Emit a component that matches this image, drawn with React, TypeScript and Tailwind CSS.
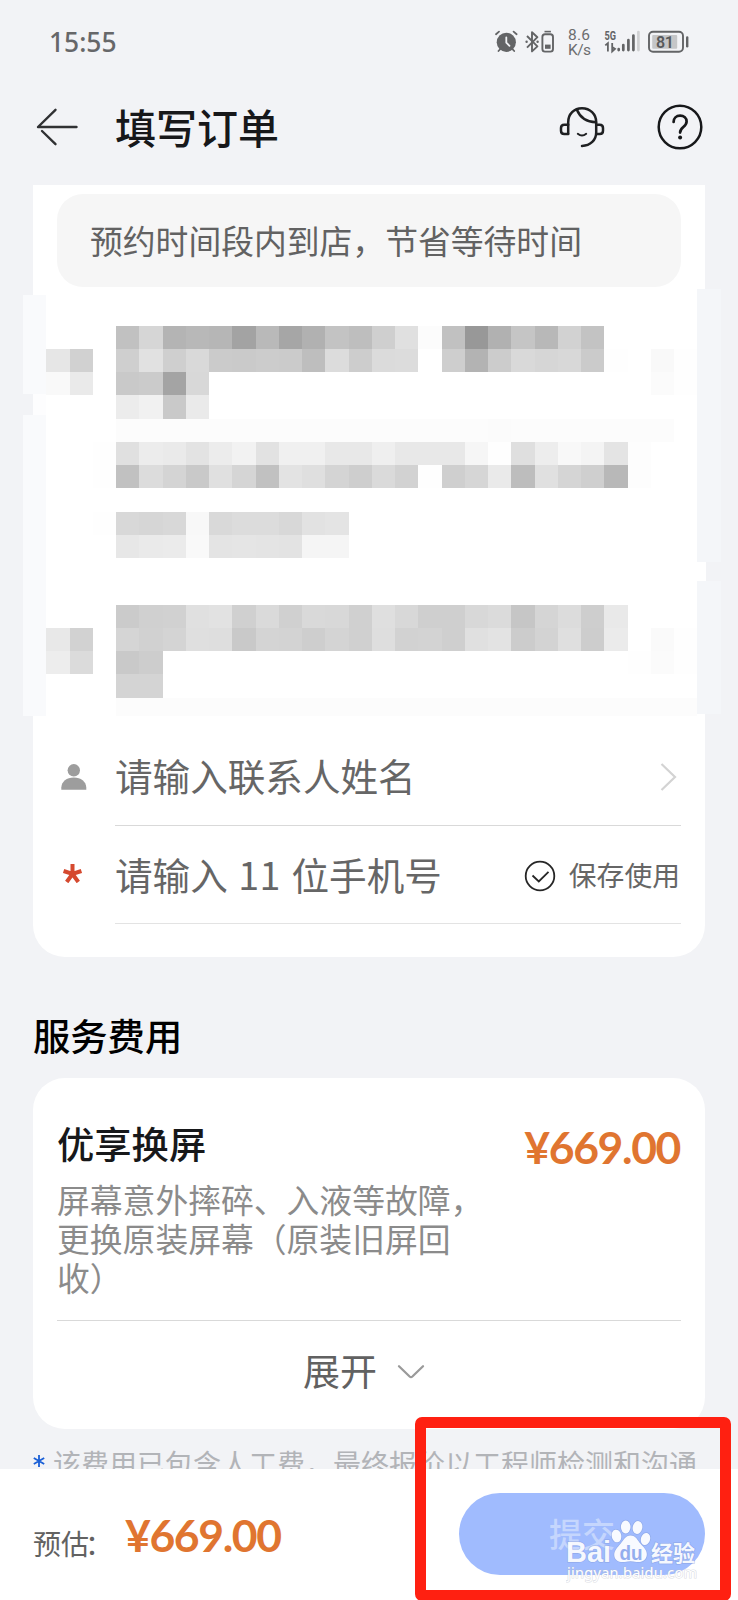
import React from 'react';

const CELL = 23.25;

// Each row: [first column, grey level per cell]. Columns start at the left edge strip.
const MOSAIC: Array<Array<[number, string]>> = [
  [[4, 'c1 d6 b4 b8 b6 a3 b9 a6 b1 c3 be cf e0 fc c1 98 b1 c5 b8 d2 c3']],
  [[1, 'e6 d1 ff cf e1 cf d9 cb ca cc cb be dc cd db dc ff ce b3 cc d9 d6 d8 cb fe'], [27, 'f9 fe']],
  [[1, 'f9 ea ff c9 cb a4 d8'], [27, 'fb fe']],
  [[4, 'ec f1 c9 ea']],
  [[4, 'fc fc fc fc fc fc fc fc fc fc fc fc fc fc fc fc fb fc fc fc fc fc fc fc']],
  [[3, 'fe e0 ec ea e3 ec f2 e2 f0 f0 e8 e8 ef e8 e8 e8 f6 fe df ed f8 f4 e4 fd']],
  [[3, 'fe c1 dc d4 c9 e0 d5 c1 e3 df d4 ce da d2 fe cf d6 ea bd e0 d5 cf b8 fd']],
  [],
  [[3, 'fe d8 d6 d8 f8 d9 dc dc d8 e2 e4']],
  [[4, 'e7 ea eb f9 e4 e5 e4 e3 f5 f5']],
  [],
  [],
  [[4, 'cb d0 d1 e0 e2 d0 da d0 d9 d8 d0 df d8 cf cf d8 db c6 d5 dc ce e9']],
  [[1, 'e8 d2 ff d5 d1 d4 df de c9 d4 d3 ce d4 d0 de d2 d3 cf e0 e3 cc d3 df cd eb'], [27, 'fa fe']],
  [[1, 'ed db ff c9 cd'], [26, 'fe fb fe']],
  [[4, 'd4 d4']],
];

const Mosaic: React.FC = () => (
  <div className="-mx-[10px] flex h-[429px] w-[698px] shrink-0">
    <div className="flex w-[23.25px] shrink-0 flex-col pt-[8px]">
      <div className="h-[99px] bg-[#f9fafc]" />
      <div className="ml-[10px] h-[21px] bg-[#fdfdfe]" />
      <div className="h-[301px] bg-[#f9fafc]" />
    </div>
    <div className="flex w-[651px] shrink-0 flex-col pt-[39px]">
      {MOSAIC.map((row, y) => (
        <div
          key={y}
          className="grid shrink-0"
          style={{ height: CELL, gridTemplateColumns: `repeat(28, ${CELL}px)` }}
        >
          {row.flatMap(([start, greys]) =>
            greys.split(' ').map((g, i) => (
              <div
                key={start + i}
                style={{ gridColumn: start + i, gridRow: 1, backgroundColor: `#${g}${g}${g}` }}
              />
            ))
          )}
        </div>
      ))}
      <div className="ml-[69.75px] h-[18px] bg-[#fcfcfc]" />
    </div>
    <div className="flex w-[23.25px] shrink-0 flex-col pt-[2px]">
      <div className="h-[273px] bg-[#f4f6f9]" />
      <div className="h-[19px] w-[9px] bg-white" />
      <div className="h-[133px] bg-[#f4f6f9]" />
    </div>
  </div>
);

const StatusIcons: React.FC = () => (
  <svg width="195" height="30" viewBox="0 0 195 30" fill="none">
    {/* alarm */}
    <g stroke="#636466" strokeLinecap="round">
      <circle cx="12.3" cy="15.3" r="9.6" fill="#636466" stroke="none" />
      <path d="M2 7.2l3-2.6M22.6 7.2l-3-2.6M4.5 24l2.4-2.6M20.2 24l-2.4-2.6" strokeWidth="1.8" />
      <path d="M12.3 10.3v5.3l3.2 3.2" stroke="#f2f3f6" strokeWidth="1.8" />
    </g>
    {/* bluetooth */}
    <path d="M33 9l10.4 10.4-5.4 5V5.2l5.4 5L33 20.6" stroke="#636466" strokeWidth="1.9" strokeLinejoin="round" />
    <circle cx="32.6" cy="14.8" r="1.2" fill="#636466" />
    <circle cx="43.6" cy="14.8" r="1.2" fill="#636466" />
    <rect x="48.4" y="7.3" width="10.6" height="17.3" rx="2.6" stroke="#636466" strokeWidth="1.9" />
    <path d="M50.5 4.6h6.4" stroke="#636466" strokeWidth="1.6" />
    <rect x="51" y="17.6" width="5.6" height="4.2" fill="#636466" />
    {/* network speed */}
    <g fill="#6c6d6f" fontFamily="Roboto, sans-serif">
      <text x="74" y="13" fontSize="15.5" textLength="22">8.6</text>
      <text x="74" y="27.6" fontSize="15.5" textLength="23">K/s</text>
    </g>
    <text x="110.5" y="12.8" fontSize="12" fontWeight="700" fill="#636466" fontFamily="Roboto, sans-serif" textLength="11.5" lengthAdjust="spacingAndGlyphs">5G</text>
    <path d="M111.3 18.4l2.6-2.2v8.4M118.2 16v8.4l2.8-2.6-2.8-1.8" stroke="#636466" strokeWidth="1.8" />
    <g strokeWidth="2.7" strokeLinecap="round">
      <path d="M124.7 22.2v.9M129.3 18v5.1M134.4 13.2v9.9M139.4 8.6v14.5" stroke="#636466" />
      <path d="M144.4 5v18.1" stroke="#cfd0d2" />
    </g>
    {/* battery */}
    <rect x="155" y="4.8" width="34" height="20" rx="4" stroke="#636466" strokeWidth="1.9" />
    <rect x="158.2" y="8" width="25" height="13.8" rx="1" fill="#c5c6c8" />
    <path d="M193.2 10.5v8.8" stroke="#636466" strokeWidth="2.4" strokeLinecap="round" />
    <text x="162" y="20.5" fontSize="16" fontWeight="600" fill="#58595b" fontFamily="Roboto, sans-serif" textLength="18">81</text>
  </svg>
);

const ServiceIcon: React.FC = () => (
  <svg width="46" height="42" viewBox="0 0 46 42" fill="none" stroke="#1f2022" strokeWidth="2.5" strokeLinecap="round">
    <path d="M9.2 27.5V16.2C9.2 8 15 2.3 23 2.3S37.2 8 37.2 16.2v10.3C37.2 34 31.5 39.6 23 39.9" />
    <path d="M9.2 18.7H5.3Q2 18.7 2 22v2.7Q2 28 5.3 28h3.9M37.2 18.7h3.5Q44 18.7 44 22v2.7Q44 28 40.7 28h-3.5" />
    <path d="M18 4c3 7.2 8.2 12 19 12.3" />
    <path d="M18.8 27.8c2.6 2.2 5.8 2.2 8.4 0" strokeWidth="2" />
  </svg>
);

const HelpIcon: React.FC = () => (
  <svg width="46" height="46" viewBox="0 0 46 46" fill="none" stroke="#17181a" strokeWidth="2.5" strokeLinecap="round">
    <circle cx="23" cy="23" r="21.3" />
    <path d="M16.6 18c0-3.800 2.700-6.400 6.500-6.400s6.500 2.500 6.500 6c0 5.400-6.500 5.600-6.500 11" strokeWidth="2.7" />
    <circle cx="23.1" cy="33.4" r="2" fill="#17181a" stroke="none" />
  </svg>
);

const Watermark: React.FC = () => (
  <div className="absolute left-[566px] top-[1518px] h-[66px] w-[134px]">
    <svg width="134" height="66" viewBox="0 0 134 66">
      <g fill="#fff" fillOpacity="0.93" stroke="#7f98d6" strokeOpacity="0.45" strokeWidth="1.4" paintOrder="stroke">
        <text x="0" y="43.5" fontSize="29" fontWeight="700" fontFamily="Liberation Sans, sans-serif" textLength="45" lengthAdjust="spacingAndGlyphs">Bai</text>
        <ellipse cx="50.5" cy="18" rx="4.8" ry="6.4" transform="rotate(-12 50.5 18)" />
        <ellipse cx="59.7" cy="9" rx="4.800" ry="6.500" />
        <ellipse cx="71.500" cy="9.500" rx="4.800" ry="6.500" transform="rotate(12 71.500 9.500)" />
        <ellipse cx="79.500" cy="21" rx="4.600" ry="6.200" transform="rotate(15 79.500 21)" />
        <path d="M64.500 17.500c5.500 0 7 4.800 10 8.300 3.600 3.900 6.800 6.700 6.300 11.300-.5 5.300-5.300 7.800-10.500 6.800-4.200-.8-7.300-.8-11.500 0-5.200 1-10-1.500-10.500-6.200-.5-5.200 3.200-8.300 6.300-12 3.200-3.600 4.700-8.200 9.900-8.200z" />
        <text x="85" y="43" fontSize="22" fontWeight="700" fontFamily="Noto Sans CJK SC, sans-serif" textLength="44">经验</text>
      </g>
      <text x="53.500" y="41.500" fontSize="20" fontWeight="700" fill="#94aeee" fontFamily="Liberation Sans, sans-serif" textLength="23" lengthAdjust="spacingAndGlyphs">du</text>
      <text x="1" y="60" fontSize="14.500" fill="#fff" stroke="#b8bcc8" strokeOpacity="0.5" strokeWidth="1.200" paintOrder="stroke" fontFamily="Noto Sans, sans-serif" textLength="130">jingyan.baidu.com</text>
    </svg>
  </div>
);

const Price: React.FC = () => (
  <span className="font-['Lato',sans-serif] text-[44.5px] font-bold leading-none tracking-[-1.4px] text-[#e07530] [font-kerning:none]">
    ¥669.00
  </span>
);

const App: React.FC = () => {
  return (
    <div className="relative flex h-[1600px] w-[738px] flex-col overflow-hidden bg-[#f2f3f6] font-['Noto_Sans_CJK_SC',sans-serif]">
      <div className="flex h-[84px] shrink-0 items-center justify-between pl-[49px] pr-[49px]">
        <span className="font-['Noto_Sans',sans-serif] text-[26.4px] font-medium leading-none text-[#666769]">15:55</span>
        <StatusIcons />
      </div>

      <header className="flex h-[101px] shrink-0 items-center pb-[15px] pl-[36px] pr-[35px]">
        <svg width="42" height="38" viewBox="0 0 42 38" fill="none" stroke="#303133" strokeWidth="2.4" strokeLinecap="round" strokeLinejoin="round">
          <path d="M40.5 19H2L19.5 1.8M6 23l13.5 13.2" />
        </svg>
        <h1 className="-mt-[2px] ml-[37px] text-[41px] font-medium leading-none text-[#17181a]">填写订单</h1>
        <div className="ml-auto flex items-center gap-[52px]">
          <ServiceIcon />
          <HelpIcon />
        </div>
      </header>

      <section className="mx-[33px] flex h-[772px] shrink-0 flex-col rounded-b-[32px] bg-white">
        <div className="mx-[24px] mt-[8.500px] flex h-[93px] shrink-0 items-center rounded-[26px] bg-[#f6f6f6] pl-[33px] text-[32.800px] leading-none text-[#626262]">
          预约时间段内到店，节省等待时间
        </div>
        <Mosaic />
        <div className="flex h-[110px] shrink-0 pl-[24px] pr-[24px]">
          <div className="flex w-[58px] items-center pt-[13px]">
            <svg className="ml-[4px]" width="26" height="26" viewBox="0 0 26 26" fill="#9d9d9d">
              <circle cx="12.8" cy="6.3" r="6.2" />
              <path d="M.3 25.7V23.5C.8 17.5 5.5 13.6 12.8 13.6S24.8 17.5 25.3 23.5v2.2z" />
            </svg>
          </div>
          <div className="flex flex-1 items-center justify-between border-b border-[#d9d9d9] pt-[13px]">
            <span className="-mt-[3px] text-[37.6px] leading-none text-[#666]">请输入联系人姓名</span>
            <svg className="mr-[4px]" width="17" height="30" viewBox="0 0 17 30" fill="none" stroke="#d3d3d3" strokeWidth="2.2">
              <path d="M1.5 2L15 15 1.5 28" />
            </svg>
          </div>
        </div>
        <div className="flex h-[98.5px] shrink-0 pl-[24px] pr-[24px]">
          <div className="flex w-[58px] items-center">
            <svg className="-mt-[2px] ml-[6px]" width="19" height="19" viewBox="0 0 19 19" stroke="#d5492f" strokeWidth="4" fill="none">
              <path d="M9.5 0v10M.6 7l8.9 3 8.9-3M9.5 10l-5.8 8M9.5 10l5.8 8" />
            </svg>
          </div>
          <div className="flex flex-1 items-center border-b border-[#e3e3e3]">
            <span className="text-[37.6px] leading-none text-[#666] [word-spacing:2px]">
              请输入 <span className="tracking-[0.6px]">11</span> 位手机号
            </span>
            <svg className="ml-auto mr-[12.5px] mt-[3px]" width="32" height="32" viewBox="0 0 32 32" fill="none" stroke="#262626" strokeWidth="1.8">
              <circle cx="16" cy="16" r="14.3" />
              <path d="M8.500 15.5l6.3 6 9.7-9.7" />
            </svg>
            <span className="mr-[1px] mt-[1px] text-[27.8px] leading-none text-[#666]">保存使用</span>
          </div>
        </div>
      </section>

      <h2 className="flex h-[120.5px] shrink-0 items-center pl-[33px] pt-[36px] text-[37.3px] font-medium leading-none text-black">服务费用</h2>

      <section className="mx-[33px] flex h-[351.5px] shrink-0 flex-col rounded-[32px] bg-white px-[24px]">
        <div className="flex h-[243px] shrink-0 justify-between border-b border-[#d9d9d9]">
          <div className="pt-[46px]">
            <h3 className="text-[37.3px] font-medium leading-[38px] text-[#17181a]">优享换屏</h3>
            <p className="mt-[17px] w-[430px] text-[32.8px] leading-[39px] text-[#8b8b8b]">
              屏幕意外摔碎、入液等故障，<br />更换原装屏幕（原装旧屏回<br />收）
            </p>
          </div>
          <div className="pr-[1px] pt-[47px]">
            <Price />
          </div>
        </div>
        <div className="flex flex-1 items-center justify-center gap-[20px] pb-[6px] pr-[10px]">
          <span className="-mt-[2px] text-[37px] leading-none text-[#616161]">展开</span>
          <svg width="28" height="16" viewBox="0 0 28 16" fill="none" stroke="#9a9a9a" strokeWidth="2.3" strokeLinecap="round">
            <path d="M2 2.2l10.600 10.300q1.400 1.200 2.800 0L26 2.200" />
          </svg>
        </div>
      </section>

      <div className="h-[40px] shrink-0 overflow-hidden whitespace-nowrap pl-[33px] pt-[20px] text-[28px] leading-[29px] text-[#b2b4b8]">
        <span className="mr-[8px] inline-block align-top">
          <svg width="12" height="12" viewBox="0 0 12 12" className="mt-[6px]" stroke="#1a5fd6" strokeWidth="1.8">
            <path d="M6 0v12M.8 3l10.4 6M11.2 3L.8 9" />
          </svg>
        </span>
        该费用已包含人工费，最终报价以工程师检测和沟通
      </div>

      <footer className="flex h-[131px] shrink-0 bg-white pl-[33px] pr-[33px]">
        <span className="w-[92px] shrink-0 whitespace-nowrap pt-[59px] text-[28px] leading-[30px] text-[#626262]">
          预估<span className="-ml-[4px]">：</span>
        </span>
        <span className="pt-[44px] leading-none"><Price /></span>
        <button className="ml-auto mt-[24px] h-[82px] w-[246px] rounded-full bg-[#a0bbfe] pb-[2px] text-[33px] font-medium leading-none text-[#c5d6fd]">
          提交
        </button>
      </footer>

      <Watermark />
      <div className="absolute left-[415px] top-[1417px] h-[184px] w-[315.500px] rounded-[7px] border-[11px] border-[#ff2011]" />
    </div>
  );
};

export default App;
